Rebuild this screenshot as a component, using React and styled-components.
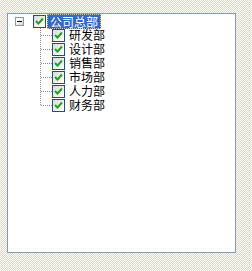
import React from "react";
import styled, { createGlobalStyle } from "styled-components";

const Global = createGlobalStyle`
  html, body {
    margin: 0;
    padding: 0;
    width: 252px;
    height: 271px;
    overflow: hidden;
    background-color: #ffffff;
    background-image: repeating-conic-gradient(#dcd6c4 0 25%, #ffffff 0 50%);
    background-size: 2px 2px;
    font-family: "Noto Sans CJK SC", "Noto Sans", sans-serif;
  }
`;

const Panel = styled.div`
  box-sizing: border-box;
  margin: 13px 0 0 7px;
  width: 229px;
  height: 240px;
  border: 1px solid #7f9db9;
  background: #ffffff;
`;

const Tree = styled.div`
  display: flex;
  flex-direction: column;
`;

const RootRow = styled.div`
  display: flex;
  align-items: center;
  height: 15px;
  padding-left: 7px;
`;

const Expander = styled.span`
  box-sizing: border-box;
  width: 9px;
  height: 9px;
  border: 1px solid #8a9aac;
  background: linear-gradient(135deg, #ffffff 30%, #d6d0c2 100%);
  display: flex;
  align-items: center;
  justify-content: center;
  margin-right: 9px;
  &::after {
    content: "";
    width: 5px;
    height: 1px;
    background: #000;
  }
`;

const Box = styled.span`
  box-sizing: border-box;
  width: 13px;
  height: 13px;
  flex: none;
  border: 1px solid #1c5180;
  background: linear-gradient(135deg, #dcdcd4 0%, #ffffff 100%);
  display: flex;
  align-items: center;
  justify-content: center;
`;

const Label = styled.span`
  box-sizing: border-box;
  font-size: 12px;
  line-height: 12px;
  height: 12px;
  color: #000000;
  padding: 0 3px;
  margin-left: 1px;
  white-space: nowrap;
`;

const SelectedLabel = styled(Label)`
  height: 15px;
  line-height: 13px;
  color: #ffffff;
  background: #316ac5;
  border: 1px dotted #e8c27a;
  padding: 0 2px;
`;

const Children = styled.div`
  display: flex;
  flex-direction: column;
  margin-top: -1px;
  padding-left: 32px;
`;

const ChildRow = styled.div`
  display: flex;
  align-items: center;
  height: 14px;
`;

const Check = () => (
  <Box>
    <svg width="9" height="9" viewBox="0 0 9 9">
      <path d="M1 4 L3.5 6.5 L8 1.5" fill="none" stroke="#21a121" strokeWidth="2" />
    </svg>
  </Box>
);

const Connector = ({ last }) => (
  <svg width="12" height="14" viewBox="0 0 12 14" style={{ flex: "none" }}>
    <line x1="0.5" y1="0" x2="0.5" y2={last ? 7.5 : 14} stroke="#8c8c8c" strokeDasharray="1 1" />
    <line x1="1" y1="7.5" x2="12" y2="7.5" stroke="#8c8c8c" strokeDasharray="1 1" />
  </svg>
);

const items = ["研发部", "设计部", "销售部", "市场部", "人力部", "财务部"];

export default function App() {
  return (
    <>
      <Global />
      <Panel>
        <Tree>
          <RootRow>
            <Expander />
            <Check />
            <SelectedLabel>公司总部</SelectedLabel>
          </RootRow>
          <Children>
            {items.map((t, i) => (
              <ChildRow key={t}>
                <Connector last={i === items.length - 1} />
                <Check />
                <Label>{t}</Label>
              </ChildRow>
            ))}
          </Children>
        </Tree>
      </Panel>
    </>
  );
}
